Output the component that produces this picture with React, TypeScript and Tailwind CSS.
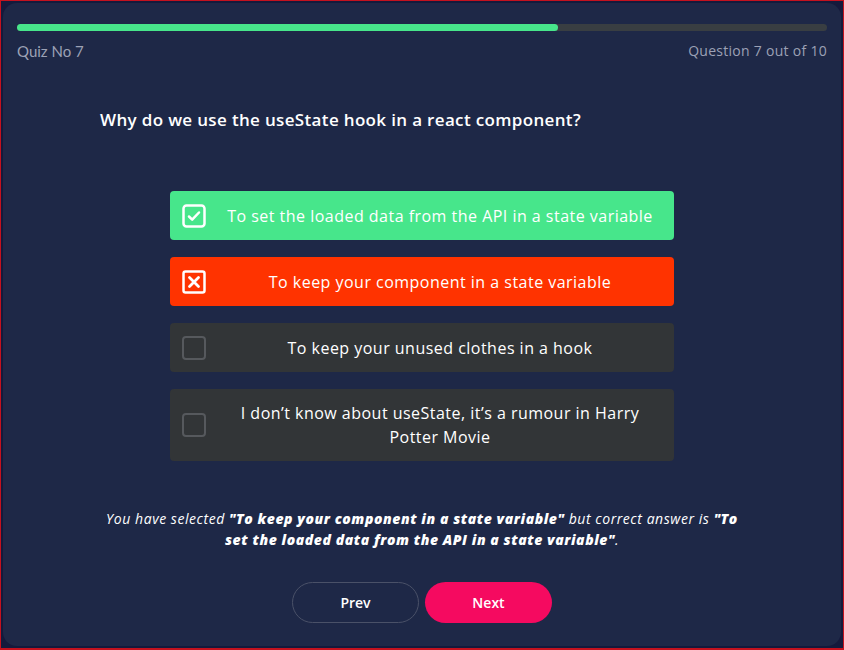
import React from 'react';

const options = [
  { text: 'To set the loaded data from the API in a state variable', state: 'correct' },
  { text: 'To keep your component in a state variable', state: 'wrong' },
  { text: 'To keep your unused clothes in a hook', state: 'none' },
  { text: 'I don’t know about useState, it’s a rumour in Harry Potter Movie', state: 'none' },
];

const CheckIcon = () => (
  <svg viewBox="0 0 24 24" className="w-[24px] h-[24px]" fill="none">
    <rect x="1.5" y="1.5" width="21" height="21" rx="3" stroke="white" strokeWidth="2.5" />
    <path d="M7 12.5l3.2 3.2L17 8.5" stroke="white" strokeWidth="2.5" strokeLinecap="round" strokeLinejoin="round" />
  </svg>
);

const CrossIcon = () => (
  <svg viewBox="0 0 24 24" className="w-[24px] h-[24px]" fill="none">
    <rect x="1.5" y="1.5" width="21" height="21" rx="2" stroke="white" strokeWidth="2.5" />
    <path d="M7.5 7.5l9 9M16.5 7.5l-9 9" stroke="white" strokeWidth="2.8" strokeLinecap="round" />
  </svg>
);

const EmptyBox = () => (
  <div className="w-[24px] h-[24px] rounded-[4px] border-[2.5px] border-[#56595d]" />
);

const Option: React.FC<{ text: string; state: string }> = ({ text, state }) => {
  const bg =
    state === 'correct' ? 'bg-[#47e68b]' : state === 'wrong' ? 'bg-[#ff3300]' : 'bg-[#323537]';
  return (
    <div className={`${bg} rounded-[4px] flex items-center min-h-[49px] pl-[12px] py-[12px]`}>
      <div className="shrink-0">
        {state === 'correct' ? <CheckIcon /> : state === 'wrong' ? <CrossIcon /> : <EmptyBox />}
      </div>
      <p className="flex-1 text-center text-white text-[16px] tracking-[0.03em] leading-[24px] px-[16px]">{text}</p>
    </div>
  );
};

export default function App() {
  return (
    <div
      className="w-[844px] h-[650px] bg-[#151a3c] border border-b-2 border-[#c4121e] p-[2px]"
      style={{ fontFamily: '"Open Sans", sans-serif' }}
    >
      <div className="h-full bg-[#1e2847] rounded-[14px] px-[14px] pt-[21px] flex flex-col">
        {/* progress */}
        <div className="h-[7px] rounded-full bg-[#393e42]">
          <div className="h-full w-[66.8%] rounded-full bg-[#47e68b]" />
        </div>
        <div className="flex justify-between mt-[9px] text-[14px] text-[#9ca1b5]">
          <span style={{ fontFamily: 'Lato, sans-serif' }} className="text-[15px]">Quiz No 7</span>
          <span className="tracking-[0.02em]">Question 7 out of 10</span>
        </div>

        <div className="w-[644px] mx-auto mt-[44px]">
          <h2 className="text-white text-[17px] font-semibold tracking-[0.02em]">
            Why do we use the useState hook in a react component?
          </h2>
        </div>

        <div className="w-[504px] mx-auto mt-[59px] flex flex-col gap-[17px]">
          {options.map((o) => (
            <Option key={o.text} text={o.text} state={o.state} />
          ))}
        </div>

        <p className="w-[700px] mx-auto mt-[47px] text-center text-white italic text-[14px] tracking-[0.04em] leading-[21px]">
          You have selected <b className="font-extrabold">"To keep your component in a state variable"</b> but
          correct answer is <b className="font-extrabold">"To</b>
          <br />
          <b className="font-extrabold">set the loaded data from the API in a state variable"</b>.
        </p>

        <div className="flex justify-center gap-[6px] mt-[32px]">
          <button className="w-[127px] h-[41px] rounded-full border border-[#4a5168] text-white text-[14px] font-semibold">
            Prev
          </button>
          <button className="w-[127px] h-[41px] rounded-full bg-[#f50a60] text-white text-[14px] font-semibold">
            Next
          </button>
        </div>
      </div>
    </div>
  );
}
